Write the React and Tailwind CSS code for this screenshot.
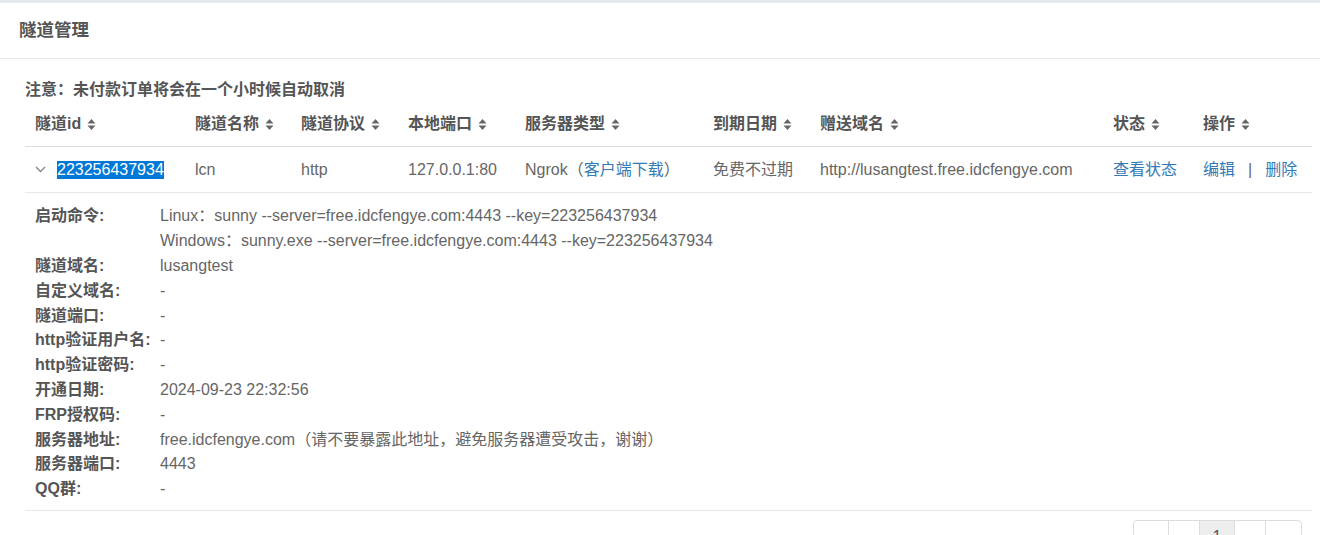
import React from "react";

const FONT = {
  fontFamily: '"Liberation Sans", Arial, "Noto Sans CJK SC", sans-serif',
};

const SortIcon = () => (
  <svg width="9" height="13" viewBox="0 0 9 13" className="ml-[6px] inline-block">
    <path d="M0.5 5.5 L4.5 1 L8.5 5.5 Z" fill="#666" />
    <path d="M0.5 7.5 L8.5 7.5 L4.5 12 Z" fill="#666" />
  </svg>
);

const Chevron = () => (
  <svg width="11" height="7" viewBox="0 0 11 7" className="inline-block">
    <path d="M1 1 L5.5 5.5 L10 1" fill="none" stroke="#888" strokeWidth="1.4" />
  </svg>
);

const columns = [
  "隧道id",
  "隧道名称",
  "隧道协议",
  "本地端口",
  "服务器类型",
  "到期日期",
  "赠送域名",
  "状态",
  "操作",
];

const details = [
  ["启动命令:", "Linux：sunny --server=free.idcfengye.com:4443 --key=223256437934"],
  ["", "Windows：sunny.exe --server=free.idcfengye.com:4443 --key=223256437934"],
  ["隧道域名:", "lusangtest"],
  ["自定义域名:", "-"],
  ["隧道端口:", "-"],
  ["http验证用户名:", "-"],
  ["http验证密码:", "-"],
  ["开通日期:", "2024-09-23 22:32:56"],
  ["FRP授权码:", "-"],
  ["服务器地址:", "free.idcfengye.com（请不要暴露此地址，避免服务器遭受攻击，谢谢）"],
  ["服务器端口:", "4443"],
  ["QQ群:", "-"],
];

const gridCols =
  "grid grid-cols-[160px_106px_107px_117px_188px_107px_293px_90px_119px]";

const App = () => {
  return (
    <div className="h-[535px] w-[1320px] overflow-hidden bg-white text-[16px]" style={FONT}>
      <div className="h-[3px] bg-[#e6eaee]" />
      {/* Header */}
      <div className="flex h-[56px] items-center border-b border-[#e8e8e8] pl-[19px]">
        <h1 className="text-[17.5px] font-bold text-[#555]">隧道管理</h1>
      </div>

      <div className="pl-[25px] pr-[8px]">
        <p className="mt-[19px] text-[16px] font-bold leading-[24px] text-[#555]">
          注意：未付款订单将会在一个小时候自动取消
        </p>

        {/* Table header */}
        <div className={`${gridCols} h-[45px] items-center border-b border-[#ddd]`}>
          {columns.map((c) => (
            <div key={c} className="flex items-center px-[10px] font-bold text-[#555]">
              {c}
              <SortIcon />
            </div>
          ))}
        </div>

        {/* Data row */}
        <div className={`${gridCols} h-[46px] items-center border-b border-[#e8e8e8] text-[#666]`}>
          <div className="flex items-center px-[10px]">
            <Chevron />
            <span className="ml-[11px] bg-[#0078d7] leading-[18px] text-white">223256437934</span>
          </div>
          <div className="px-[10px]">lcn</div>
          <div className="px-[10px]">http</div>
          <div className="px-[10px]">127.0.0.1:80</div>
          <div className="px-[10px]">
            Ngrok（<span className="text-[#337ab7]">客户端下载</span>）
          </div>
          <div className="px-[10px]">免费不过期</div>
          <div className="whitespace-nowrap px-[10px]">http://lusangtest.free.idcfengye.com</div>
          <div className="px-[10px] text-[#337ab7]">查看状态</div>
          <div className="flex items-center px-[10px]">
            <span className="text-[#337ab7]">编辑</span>
            <span className="mx-[13px] text-[#666]">|</span>
            <span className="text-[#337ab7]">删除</span>
          </div>
        </div>

        {/* Detail */}
        <div className="border-b border-[#e8e8e8] pb-[8px] pl-[10px] pt-[11px]">
          {details.map(([label, value], i) => (
            <div key={i} className="grid h-[24.8px] grid-cols-[125px_1fr] items-center">
              <span className="whitespace-nowrap font-bold text-[#555]">{label}</span>
              <span className="whitespace-nowrap text-[#666]">{value}</span>
            </div>
          ))}
        </div>

        {/* Pagination */}
        <div className="mt-[9px] flex justify-end pr-[10px]">
          <div className="flex h-[34px] overflow-hidden rounded-[4px] border border-[#ddd] text-[#337ab7]">
            <span className="flex w-[35px] items-center justify-center border-r border-[#ddd] pt-[4px] text-[14px]">«</span>
            <span className="flex w-[31px] items-center justify-center border-r border-[#ddd] pt-[4px] text-[14px]">‹</span>
            <span className="flex w-[35px] items-center justify-center border-r border-[#ddd] bg-[#eee] text-[#555]">1</span>
            <span className="flex w-[31px] items-center justify-center border-r border-[#ddd] pt-[4px] text-[14px]">›</span>
            <span className="flex w-[35px] items-center justify-center pt-[4px] text-[14px]">»</span>
          </div>
        </div>
      </div>
    </div>
  );
};

export default App;
